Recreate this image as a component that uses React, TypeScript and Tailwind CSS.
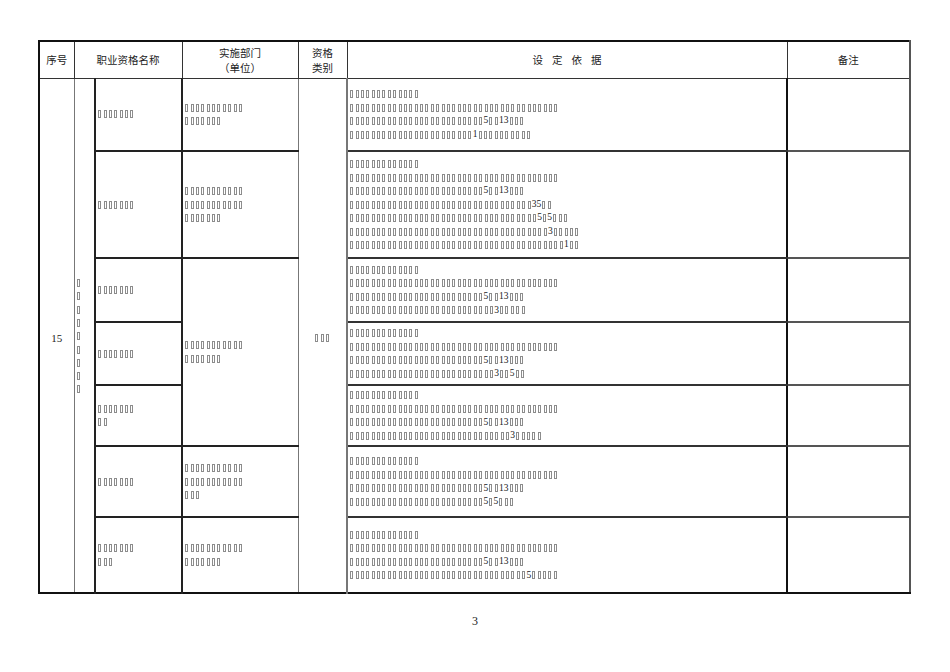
const B = "□";
const rep = (n: number) => B.repeat(n);

// missing-glyph boxes as in the scanned document
function Tofu({ text }: { text: string }) {
  return (
    <span className="inline-flex items-center">
      {Array.from(text).map((ch, i) =>
        ch === B ? (
          <span key={i} className="inline-block w-[3px] h-[8px] mx-[1.2px] border border-[#8c8c8c]" />
        ) : (
          <span key={i} className="text-[9.5px] leading-none text-[#222] font-['Liberation_Serif',serif]">
            {ch}
          </span>
        )
      )}
    </span>
  );
}

function Lines({ lines }: { lines: string[] }) {
  return (
    <div className="flex flex-col">
      {lines.map((l, i) => (
        <div key={i} className="flex items-center h-[13.5px]">
          <Tofu text={l} />
        </div>
      ))}
    </div>
  );
}

const L1 = rep(13);
const L2 = rep(39);
const L3 = rep(25) + "5" + rep(2) + "13" + rep(3);

interface Row {
  h: string;
  name: string[];
  dept?: string[];
  deptSpan?: number;
  basis: string[];
}

const rows: Row[] = [
  { h: "h-[73px]", name: [rep(7)], dept: [rep(11), rep(7)], basis: [L1, L2, L3, rep(23) + "1" + rep(10)] },
  {
    h: "h-[107px]",
    name: [rep(7)],
    dept: [rep(11), rep(11), rep(7)],
    basis: [L1, L2, L3, rep(34) + "35" + rep(2), rep(35) + "5" + B + "5" + rep(3), rep(37) + "3" + rep(5), rep(40) + "1" + rep(2)],
  },
  { h: "h-[64px]", name: [rep(7)], dept: [rep(11), rep(7)], deptSpan: 3, basis: [L1, L2, L3, rep(27) + "3" + rep(5)] },
  { h: "h-[63px]", name: [rep(7)], basis: [L1, L2, L3, rep(27) + "3" + rep(2) + "5" + rep(2)] },
  { h: "h-[61px]", name: [rep(7), rep(2)], basis: [L1, L2, L3, rep(30) + "3" + rep(5)] },
  { h: "h-[71px]", name: [rep(7)], dept: [rep(11), rep(11), rep(3)], basis: [L1, L2, L3, rep(25) + "5" + B + "5" + rep(3)] },
  { h: "h-[76px]", name: [rep(7), rep(3)], dept: [rep(11), rep(7)], basis: [L1, L2, L3, rep(33) + "5" + rep(5)] },
];

export default function App() {
  return (
    <div className="w-[950px] h-[672px] bg-white font-['Noto_Sans_CJK_SC',sans-serif] text-[#222]">
      <div className="pt-[40px] pl-[38px]">
        <table className="w-[871px] table-fixed border-collapse border-2 border-[#111] border-r-[#555]">
          <colgroup>
            <col className="w-[35px]" />
            <col className="w-[21px]" />
            <col className="w-[87px]" />
            <col className="w-[116px]" />
            <col className="w-[49px]" />
            <col className="w-[440px]" />
            <col className="w-[123px]" />
          </colgroup>
          <thead>
            <tr className="h-[37px] text-[10.5px] leading-[15px] font-normal">
              <th className="font-normal border border-[#333]">序号</th>
              <th colSpan={2} className="font-normal border border-[#333]">职业资格名称</th>
              <th className="font-normal border border-[#333]">
                <div>实施部门</div>
                <div>（单位）</div>
              </th>
              <th className="font-normal border border-[#333]">
                <div>资格</div>
                <div>类别</div>
              </th>
              <th className="font-normal border border-[#333]">
                <span className="tracking-[9px] pl-[9px]">设定依据</span>
              </th>
              <th className="font-normal border border-[#333]">备注</th>
            </tr>
          </thead>
          <tbody>
            {rows.map((r, i) => (
              <tr key={i} className={r.h}>
                {i === 0 && (
                  <>
                    <td rowSpan={7} className="border-r border-[#777] text-center align-middle">
                      <span className="text-[11px] font-['Liberation_Serif',serif] text-[#222]">15</span>
                    </td>
                    <td rowSpan={7} className="border-r-2 border-[#222] align-middle pl-[2px]">
                      <div className="flex flex-col gap-[5.3px] pt-[2px]">
                        {Array.from({ length: 9 }).map((_, k) => (
                          <span key={k} className="block w-[3px] h-[8px] border border-[#8c8c8c]" />
                        ))}
                      </div>
                    </td>
                  </>
                )}
                <td className={`${i < 6 ? "border-b-2" : ""} border-r-2 border-[#222] align-middle pl-[1px]`}>
                  <Lines lines={r.name} />
                </td>
                {r.dept && (
                  <td
                    rowSpan={r.deptSpan ?? 1}
                    className={`${i < 6 ? "border-b-2" : ""} border-r border-[#222] border-r-[#777] align-middle pl-[1px]`}
                  >
                    <Lines lines={r.dept} />
                  </td>
                )}
                {i === 0 && (
                  <td rowSpan={7} className="border-r-2 border-[#777] text-center align-middle">
                    <Tofu text={rep(3)} />
                  </td>
                )}
                <td className={`${i < 6 ? "border-b-2" : ""} border-r-2 border-[#333] border-r-[#111] align-middle pl-[1px]`}>
                  <Lines lines={r.basis} />
                </td>
                <td className={`${i < 6 ? "border-b-2" : ""} border-[#555]`} />
              </tr>
            ))}
          </tbody>
        </table>
      </div>
      <div className="mt-[18px] text-center text-[12px] font-['Liberation_Serif',serif] text-[#222]">3</div>
    </div>
  );
}
